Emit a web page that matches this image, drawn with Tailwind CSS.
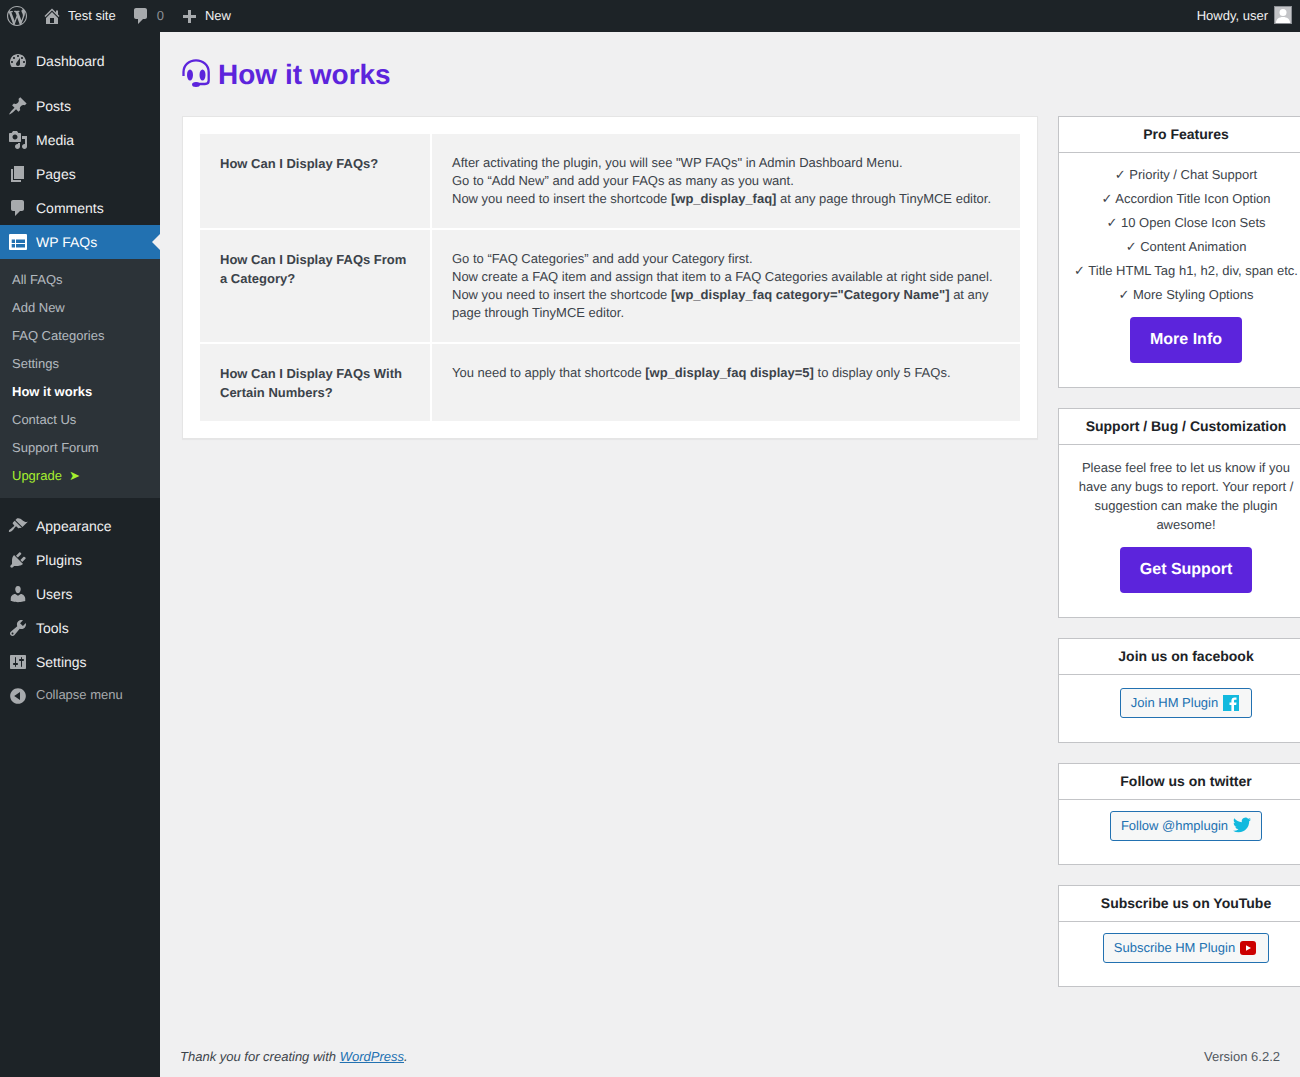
<!DOCTYPE html>
<html lang="en">
<head>
  <meta charset="UTF-8" />
  <title>How it works</title>
  <script src="https://cdn.jsdelivr.net/npm/@tailwindcss/browser@4"></script>
</head>
<body class="bg-[#f0f0f1] text-[#3c434a] font-['Liberation_Sans',Arial,sans-serif] text-[13px] leading-[18.2px] [text-rendering:geometricPrecision]">
<div class="h-[1077px] flex flex-col overflow-hidden">

  <!-- Admin bar -->
  <header class="h-8 shrink-0 bg-[#1d2327] flex items-center justify-between text-[#f0f0f1]">
    <div class="flex items-center">
      <svg class="w-5 h-5 ml-[7px] text-[#a7aaad]" viewBox="0 0 20 20" fill="currentColor"><path fill-rule="evenodd" d="M10 0C4.48 0 0 4.49 0 10c0 5.52 4.48 10 10 10 5.51 0 10-4.48 10-10C20 4.49 15.51 0 10 0zM1.11 10c0-1.3.23-2.48.72-3.59L6.1 18.09C3.12 16.65 1.11 13.53 1.11 10zm9.02 1.46l2.58 6.98c-.86.29-1.76.45-2.71.45-.79 0-1.57-.11-2.29-.33l2.42-7.1zM7.78 15.37L4.37 6.22c.55-.02 1.17-.08 1.17-.08.5-.06.44-1.13-.06-1.11 0 0-1.45.11-2.37.11-.18 0-.37 0-.58-.01C4.12 2.69 6.87 1.11 10 1.11c2.33 0 4.45.87 6.05 2.34-.68-.11-1.65.39-1.65 1.58 0 .74.45 1.36.9 2.1.35.61.55 1.36.55 2.46 0 1.49-1.4 5-1.4 5l-3.03-8.37c.54-.02.82-.17.82-.17.5-.05.44-1.25-.06-1.22 0 0-1.44.12-2.38.12-.87 0-2.33-.12-2.33-.12-.5-.03-.56 1.2-.06 1.22l.92.08 1.26 3.41-2.36 6.83zM17.41 10c.24-.64.74-1.87.43-4.25.7 1.29 1.05 2.71 1.05 4.25 0 3.29-1.73 6.24-4.4 7.78L17.41 10z"/></svg>
      <svg class="w-5 h-5 ml-[15px] text-[#a7aaad]" viewBox="0 0 20 20" fill="currentColor"><path d="M16 8.5l1.53 1.53-1.06 1.06L10 4.62l-6.47 6.47-1.06-1.06L10 2.5l4 4v-2h2v4zm-6-2.46l6 5.99V18H4v-5.97zM12 17v-5H8v5h4z"/></svg>
      <span class="ml-[6px]">Test site</span>
      <svg class="w-5 h-5 ml-[15px] text-[#a7aaad]" viewBox="0 0 20 20" fill="currentColor"><path d="M5 2h9c1.1 0 2 .9 2 2v7c0 1.1-.9 2-2 2h-2l-5 5v-5H5c-1.1 0-2-.9-2-2V4c0-1.1.9-2 2-2z"/></svg>
      <span class="ml-[6px] text-[#8c8f94]">0</span>
      <svg class="w-5 h-5 ml-[16px] mt-[2px] text-[#a7aaad]" viewBox="0 0 20 20" fill="currentColor"><path d="M8 3h3v5h5v3h-5v5H8v-5H3V8h5z"/></svg>
      <span class="ml-[5px]">New</span>
    </div>
    <div class="flex items-center mr-2">
      <span>Howdy, user</span>
      <div class="w-[18px] h-[18px] ml-[6px] mb-[2px] bg-[#c3c4c7] border border-[#8c8f94] overflow-hidden flex justify-center">
        <svg class="w-4 h-4" viewBox="0 0 16 16" fill="#fff"><circle cx="8" cy="5.5" r="3.5"/><path d="M1 16c0-4 3-6 7-6s7 2 7 6z"/></svg>
      </div>
    </div>
  </header>

  <div class="flex flex-1 min-h-0">
    <!-- Sidebar -->
    <aside class="w-40 shrink-0 bg-[#1d2327] text-[#f0f0f1] text-[14px] pt-3">
      <a class="h-[34px] flex items-center gap-2 pl-2"><svg class="w-5 h-5 text-[#a7aaad]" viewBox="0 0 20 20" fill="currentColor"><path fill-rule="evenodd" d="M3.76 16h12.48c1.1-1.37 1.76-3.11 1.76-5 0-4.42-3.58-8-8-8s-8 3.58-8 8c0 1.89.66 3.63 1.76 5zM10 4c.55 0 1 .45 1 1s-.45 1-1 1-1-.45-1-1 .45-1 1-1zM6 6c.55 0 1 .45 1 1s-.45 1-1 1-1-.45-1-1 .45-1 1-1zm8 0c.55 0 1 .45 1 1s-.45 1-1 1-1-.45-1-1 .45-1 1-1zm-5.37 5.55L12 7v6c0 1.1-.9 2-2 2s-2-.9-2-2c0-.57.24-1.08.63-1.45zM4 10c.55 0 1 .45 1 1s-.45 1-1 1-1-.45-1-1 .45-1 1-1zm12 0c.55 0 1 .45 1 1s-.45 1-1 1-1-.45-1-1 .45-1 1-1z"/></svg>Dashboard</a>
      <div class="h-[11px]"></div>
      <a class="h-[34px] flex items-center gap-2 pl-2"><svg class="w-5 h-5 text-[#a7aaad]" viewBox="0 0 20 20" fill="currentColor"><path d="M10.44 3.02l1.82-1.82 6.36 6.35-1.83 1.82c-1.05-.68-2.48-.57-3.41.36l-.75.75c-.92.93-1.04 2.35-.35 3.41l-1.83 1.82-2.41-2.41-2.8 2.79c-.42.42-3.38 2.71-3.8 2.29s1.86-3.39 2.28-3.81l2.79-2.79L4.1 9.36l1.83-1.82c1.05.69 2.48.57 3.4-.36l.75-.75c.93-.92 1.05-2.35.36-3.41z"/></svg>Posts</a>
      <a class="h-[34px] flex items-center gap-2 pl-2"><svg class="w-5 h-5 text-[#a7aaad]" viewBox="0 0 20 20" fill="currentColor"><path fill-rule="evenodd" d="M13 11V4c0-.55-.45-1-1-1h-1.67L9 1H5L3.67 3H2c-.55 0-1 .45-1 1v7c0 .55.45 1 1 1h10c.55 0 1-.45 1-1zM7 4.5c1.38 0 2.5 1.12 2.5 2.5S8.38 9.5 7 9.5 4.5 8.38 4.5 7 5.62 4.5 7 4.5zM14 6h5v10.5c0 1.38-1.12 2.5-2.5 2.5S14 17.88 14 16.5s1.12-2.5 2.5-2.5c.17 0 .34.02.5.05V9h-3V6zm-4 8.05V13h2v3.5c0 1.38-1.12 2.5-2.5 2.5S7 17.88 7 16.5 8.12 14 9.5 14c.17 0 .34.02.5.05z"/></svg>Media</a>
      <a class="h-[34px] flex items-center gap-2 pl-2"><svg class="w-5 h-5 text-[#a7aaad]" viewBox="0 0 20 20" fill="currentColor"><path d="M6 15V2h10v13H6zm-1 1h8v2H3V5h2v11z"/></svg>Pages</a>
      <a class="h-[34px] flex items-center gap-2 pl-2"><svg class="w-5 h-5 text-[#a7aaad]" viewBox="0 0 20 20" fill="currentColor"><path d="M5 2h9c1.1 0 2 .9 2 2v7c0 1.1-.9 2-2 2h-2l-5 5v-5H5c-1.1 0-2-.9-2-2V4c0-1.1.9-2 2-2z"/></svg>Comments</a>

      <a class="relative h-[34px] flex items-center gap-[9px] pl-[9px] bg-[#2271b1] text-white">
        <svg class="w-[18px] h-4" viewBox="0 0 18 16"><rect width="18" height="16" rx="1" fill="#fff"/><path d="M2.700 5.500H6V9H2.700zM7 5.500h9V9H7zM2.700 10H6v3.500H2.700zM7 10h9v3.500H7z" fill="#2271b1"/></svg>
        WP FAQs
        <span class="absolute right-0 top-[9px] border-y-8 border-r-8 border-y-transparent border-r-[#f0f0f1]"></span>
      </a>
      <ul class="bg-[#2c3338] text-[13px] pt-[7px] pb-2 text-[#f0f6fc]/70">
        <li class="h-7 flex items-center pl-3">All FAQs</li>
        <li class="h-7 flex items-center pl-3">Add New</li>
        <li class="h-7 flex items-center pl-3">FAQ Categories</li>
        <li class="h-7 flex items-center pl-3">Settings</li>
        <li class="h-7 flex items-center pl-3 font-bold text-white">How it works</li>
        <li class="h-7 flex items-center pl-3">Contact Us</li>
        <li class="h-7 flex items-center pl-3">Support Forum</li>
        <li class="h-7 flex items-center pl-3 text-[#a6f02e]">Upgrade<span class="ml-[7px]">➤</span></li>
      </ul>
      <div class="h-[11px]"></div>

      <a class="h-[34px] flex items-center gap-2 pl-2"><svg class="w-5 h-5 text-[#a7aaad]" viewBox="0 0 20 20" fill="currentColor"><path d="M14.48 11.06L7.41 3.99l1.5-1.5c.5-.56 2.3-.47 3.51.32 1.21.8 1.43 1.28 2.91 2.1 1.18.64 2.45 1.26 4.45.85zm-.71.71L6.7 4.7 4.93 6.47c-.39.39-.39 1.02 0 1.41l1.06 1.06c.39.39.39 1.03 0 1.42-.6.6-1.43 1.11-2.21 1.69-.35.26-.7.53-1.01.84C1.43 13.23.39 15.21 1 15.82c.61.61 2.59-.43 3.93-1.77.31-.31.58-.66.84-1.01.58-.78 1.09-1.61 1.69-2.21.39-.39 1.03-.39 1.42 0l1.06 1.06c.39.39 1.02.39 1.41 0z"/></svg>Appearance</a>
      <a class="h-[34px] flex items-center gap-2 pl-2"><svg class="w-5 h-5 text-[#a7aaad]" viewBox="0 0 20 20" fill="currentColor"><path d="M13.11 4.36L9.87 7.6 8 5.73l3.24-3.24c.35-.34 1.05-.2 1.56.32.52.51.66 1.21.31 1.55zm-8 1.77l.91-1.12 9.01 9.01-1.19.84c-.71.71-2.63 1.16-3.82 1.16H6.14L4.9 17.26c-.59.59-1.54.59-2.12 0-.59-.58-.59-1.53 0-2.12l1.24-1.24v-3.88c0-1.13.4-3.19 1.09-3.89zm7.26 3.97l3.24-3.24c.34-.35 1.04-.21 1.55.31.52.51.66 1.21.31 1.55l-3.24 3.25z"/></svg>Plugins</a>
      <a class="h-[34px] flex items-center gap-2 pl-2"><svg class="w-5 h-5 text-[#a7aaad]" viewBox="0 0 20 20" fill="currentColor"><path d="M10 9.25c-2.27 0-2.73-3.44-2.73-3.44C7 4.02 7.82 2 9.97 2c2.16 0 2.98 2.02 2.71 3.81 0 0-.41 3.44-2.68 3.44zm0 2.57L12.72 10c2.39 0 4.52 2.33 4.52 4.53v2.49s-3.65 1.13-7.24 1.13c-3.65 0-7.24-1.13-7.24-1.13v-2.49c0-2.25 1.94-4.48 4.47-4.48z"/></svg>Users</a>
      <a class="h-[34px] flex items-center gap-2 pl-2"><svg class="w-5 h-5 text-[#a7aaad]" viewBox="0 0 20 20" fill="currentColor"><path fill-rule="evenodd" d="M16.68 9.77c-1.34 1.34-3.3 1.67-4.95.99l-5.41 6.52c-.99.99-2.59.99-3.58 0s-.99-2.59 0-3.57l6.52-5.42c-.68-1.65-.35-3.61.99-4.95 1.28-1.28 3.12-1.62 4.72-1.06l-2.89 2.89 2.82 2.82 2.86-2.87c.53 1.58.18 3.39-1.08 4.65zM3.81 16.21c.4.39 1.04.39 1.43 0 .4-.4.4-1.04 0-1.43-.39-.4-1.03-.4-1.43 0-.39.39-.39 1.03 0 1.43z"/></svg>Tools</a>
      <a class="h-[34px] flex items-center gap-2 pl-2"><svg class="w-5 h-5 text-[#a7aaad]" viewBox="0 0 20 20" fill="currentColor"><path fill-rule="evenodd" d="M18 16V4c0-.55-.45-1-1-1H3c-.55 0-1 .45-1 1v12c0 .55.45 1 1 1h14c.55 0 1-.45 1-1zM8 11h1c.55 0 1 .45 1 1s-.45 1-1 1H8v1.5c0 .28-.22.5-.5.5s-.5-.22-.5-.5V13H6c-.55 0-1-.45-1-1s.45-1 1-1h1V5.5c0-.28.22-.5.5-.5s.5.22.5.5V11zm5-2h-1c-.55 0-1-.45-1-1s.45-1 1-1h1V5.5c0-.28.22-.5.5-.5s.5.22.5.5V7h1c.55 0 1 .45 1 1s-.45 1-1 1h-1v5.5c0 .28-.22.5-.5.5s-.5-.22-.5-.5V9z"/></svg>Settings</a>
      <a class="h-8 flex items-center gap-2 pl-2 text-[13px] text-[#a7aaad]"><svg class="w-5 h-5 mt-[2px]" viewBox="0 0 20 20" fill="currentColor"><path fill-rule="evenodd" d="M10 2.16c4.33 0 7.84 3.51 7.84 7.84s-3.51 7.84-7.84 7.84S2.16 14.33 2.16 10 5.71 2.16 10 2.16zm2 11.72V6.12L6.18 9.97z"/></svg>Collapse menu</a>
    </aside>

    <!-- Content -->
    <main class="flex-1 min-w-0 flex flex-col overflow-hidden">
      <div class="flex-1 pl-[22px] pt-[26px]">
        <h1 class="flex items-center h-[34px] text-[28px] font-bold text-[#5c24dc]">
          <svg class="w-7 h-7 mr-2 mb-1" viewBox="0 0 28 28" fill="none" stroke="currentColor" stroke-width="2.300"><path d="M1.500 17V13C1.500 6 7 1.300 14 1.300S26.700 6 26.700 13V21.500C26.700 24 25 25 23 25H14"/><ellipse cx="8" cy="16" rx="3" ry="5.500" fill="currentColor" stroke="none"/><ellipse cx="20.500" cy="16" rx="3" ry="5.500" fill="currentColor" stroke="none"/><ellipse cx="14" cy="25.500" rx="4" ry="2.500" fill="currentColor" stroke="none"/></svg>
          How it works
        </h1>

        <div class="flex gap-5 mt-6">
          <!-- Questions -->
          <section class="w-[856px] h-[323px] shrink-0 bg-white border border-[#e5e5e5] shadow-[0_1px_1px_rgba(0,0,0,0.04)] p-[17px]">
            <div class="grid grid-cols-[230px_588px] grid-rows-[94px_112px_77px] gap-[2px] leading-[18px]">
              <h3 class="bg-[#f2f2f2] px-5 pt-5 font-bold leading-[19px]">How Can I Display FAQs?</h3>
              <div class="bg-[#f2f2f2] px-5 pt-5">After activating the plugin, you will see "WP FAQs" in Admin Dashboard Menu.<br>Go to “Add New” and add your FAQs as many as you want.<br>Now you need to insert the shortcode <b>[wp_display_faq]</b> at any page through TinyMCE editor.</div>
              <h3 class="bg-[#f2f2f2] px-5 pt-5 font-bold leading-[19px]">How Can I Display FAQs From a Category?</h3>
              <div class="bg-[#f2f2f2] px-5 pt-5">Go to “FAQ Categories” and add your Category first.<br>Now create a FAQ item and assign that item to a FAQ Categories available at right side panel.<br>Now you need to insert the shortcode <b>[wp_display_faq category="Category Name"]</b> at any page through TinyMCE editor.</div>
              <h3 class="bg-[#f2f2f2] px-5 pt-5 font-bold leading-[19px]">How Can I Display FAQs With Certain Numbers?</h3>
              <div class="bg-[#f2f2f2] px-5 pt-5">You need to apply that shortcode <b>[wp_display_faq display=5]</b> to display only 5 FAQs.</div>
            </div>
          </section>

          <!-- Right column -->
          <div class="w-[256px] shrink-0 flex flex-col gap-5 text-center">
            <section class="h-[272px] bg-white border border-[#c3c4c7]">
              <h2 class="h-9 flex items-center justify-center border-b border-[#c3c4c7] text-[14px] font-bold text-[#1d2327]">Pro Features</h2>
              <ul class="pt-[10px] leading-6">
                <li>✓ Priority / Chat Support</li>
                <li>✓ Accordion Title Icon Option</li>
                <li>✓ 10 Open Close Icon Sets</li>
                <li>✓ Content Animation</li>
                <li>✓ Title HTML Tag h1, h2, div, span etc.</li>
                <li>✓ More Styling Options</li>
              </ul>
              <a class="inline-block mt-[10px] px-5 h-[46px] leading-[46px] rounded-[4px] bg-[#5c24dc] text-white text-base font-bold">More Info</a>
            </section>
            <section class="h-[210px] bg-white border border-[#c3c4c7]">
              <h2 class="h-9 flex items-center justify-center border-b border-[#c3c4c7] text-[14px] font-bold text-[#1d2327]">Support / Bug / Customization</h2>
              <p class="px-[18px] pt-[13px] leading-[19px]">Please feel free to let us know if you have any bugs to report. Your report / suggestion can make the plugin awesome!</p>
              <a class="inline-block mt-[13px] px-5 h-[46px] leading-[46px] rounded-[4px] bg-[#5c24dc] text-white text-base font-bold">Get Support</a>
            </section>
            <section class="h-[105px] bg-white border border-[#c3c4c7]">
              <h2 class="h-9 flex items-center justify-center border-b border-[#c3c4c7] text-[14px] font-bold text-[#1d2327]">Join us on facebook</h2>
              <a class="mt-[13px] inline-flex items-center gap-[5px] h-[30px] pl-[10px] pr-3 rounded-[3px] border border-[#2271b1] bg-[#f6f7f7] text-[#2271b1]">Join HM Plugin
                <svg class="w-4 h-4" viewBox="0 0 16 16"><rect width="16" height="16" fill="#12b9de"/><path d="M11 16v-6h2.200l.3-2.500H11V6c0-.8.3-1.200 1.200-1.200h1.300V2.600c-.5 0-1.200-.1-1.900-.1-2 0-3.200 1.200-3.200 3.300v1.700H6.500V10h1.900v6z" fill="#fff"/></svg>
              </a>
            </section>
            <section class="h-[102px] bg-white border border-[#c3c4c7]">
              <h2 class="h-9 flex items-center justify-center border-b border-[#c3c4c7] text-[14px] font-bold text-[#1d2327]">Follow us on twitter</h2>
              <a class="mt-[11px] inline-flex items-center gap-[5px] h-[30px] px-[10px] rounded-[3px] border border-[#2271b1] bg-[#f6f7f7] text-[#2271b1]">Follow @hmplugin
                <svg class="w-[18px] h-[18px] mb-[2px]" viewBox="0 0 24 24" fill="#12b9de"><path d="M23.95 4.57a10 10 0 0 1-2.82.77 4.96 4.96 0 0 0 2.16-2.72c-.95.55-2 .95-3.13 1.18a4.920 4.920 0 0 0-8.380 4.480C7.690 8.100 4.070 6.130 1.640 3.160a4.820 4.820 0 0 0-.66 2.470c0 1.710.87 3.210 2.190 4.100a4.900 4.900 0 0 1-2.230-.62v.06a4.920 4.920 0 0 0 3.950 4.830 5 5 0 0 1-2.210.08 4.940 4.940 0 0 0 4.600 3.420A9.870 9.870 0 0 1 0 19.540a14 14 0 0 0 7.560 2.210c9.050 0 14-7.500 14-13.980 0-.21 0-.42-.02-.63A9.940 9.940 0 0 0 24 4.590z"/></svg>
              </a>
            </section>
            <section class="h-[102px] bg-white border border-[#c3c4c7]">
              <h2 class="h-9 flex items-center justify-center border-b border-[#c3c4c7] text-[14px] font-bold text-[#1d2327]">Subscribe us on YouTube</h2>
              <a class="mt-[11px] inline-flex items-center gap-[5px] h-[30px] pl-[10px] pr-3 rounded-[3px] border border-[#2271b1] bg-[#f6f7f7] text-[#2271b1]">Subscribe HM Plugin
                <svg class="w-4 h-[14px]" viewBox="0 0 16 14"><rect width="16" height="14" rx="3" fill="#cc0000"/><path d="M6 4.200 11 7l-5 2.800z" fill="#fff"/></svg>
              </a>
            </section>
          </div>
        </div>
      </div>

      <footer class="shrink-0 flex justify-between px-5 pb-[11px] text-[#50575e]">
        <i class="text-[#3c434a]">Thank you for creating with <a class="text-[#2271b1] underline">WordPress</a>.</i>
        <span>Version 6.2.2</span>
      </footer>
    </main>
  </div>
</div>
</body>
</html>
